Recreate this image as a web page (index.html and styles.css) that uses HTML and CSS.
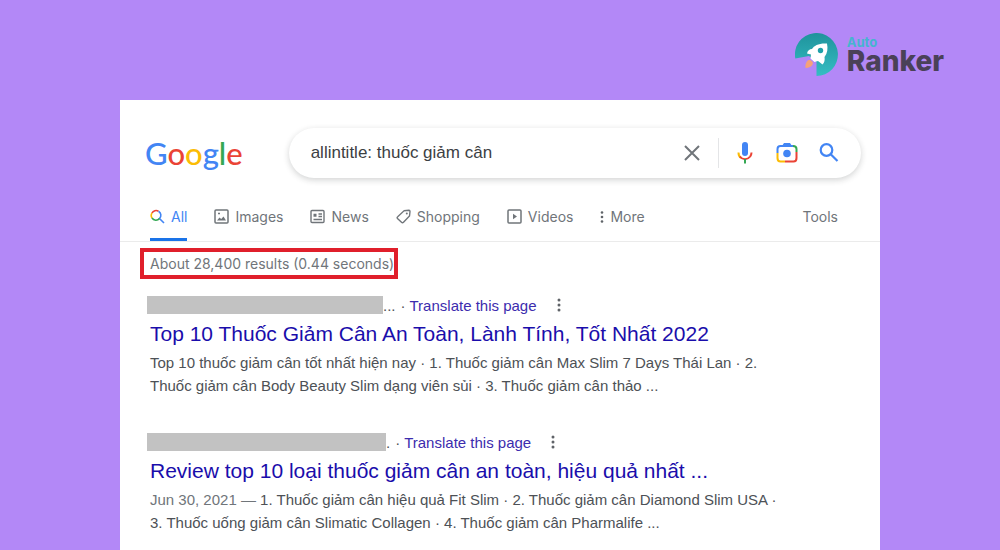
FILE: index.html
```html
<!DOCTYPE html>
<html lang="en">
<head>
<meta charset="utf-8">
<title>allintitle: thuốc giảm cân</title>
<link rel="stylesheet" href="styles.css">
</head>
<body>
<header class="banner">
  <div class="brand">
    <svg class="brand-mark" viewBox="0 0 44 44" aria-hidden="true">
      <defs><linearGradient id="teal" x1="0" y1="0" x2="0" y2="1"><stop offset="0" stop-color="#1f939c"/><stop offset="1" stop-color="#35bdc3"/></linearGradient></defs>
      <path d="M.3 25.500A21.500 21.500 0 1 1 21.500 43V29L14 23Z" fill="url(#teal)"/>
      <path d="M32 10.500C24 10 19 12.500 17 16C14.500 16 12.500 17.500 12 20.500L16 21.500L15.500 25.500L19.500 29L23 28L27.500 31.500C29.500 29.500 30 27 29.500 24C32.500 20 33 15.500 32 10.500Z" fill="#fff"/>
      <circle cx="25.500" cy="17.500" r="2.700" fill="#1fa0a9"/>
      <path d="M10.500 35C10 31.500 11.500 27.500 14 27C17 27 18.500 29.500 17.500 31.500C16.500 33.500 14 35 10.500 35Z" fill="#f6a279"/>
    </svg>
    <div class="brand-text"><span class="brand-top">Auto</span><span class="brand-main">Ranker</span></div>
  </div>
</header>
<main class="page">
  <div class="search-row">
    <a class="google" href="#" aria-label="Google"><span class="blue">G</span><span class="red">o</span><span class="yellow">o</span><span class="blue">g</span><span class="green">l</span><span class="red">e</span></a>
    <form class="search">
      <input class="query" type="text" aria-label="Search" value="allintitle: thuốc giảm cân">
      <button class="icon-button clear" type="button" aria-label="Clear"><svg class="icon-large" viewBox="0 0 22 22"><path d="M4 4L18 18M18 4L4 18" stroke="#70757a" stroke-width="2" fill="none"/></svg></button>
      <span class="divider"></span>
      <button class="icon-button" type="button" aria-label="Search by voice"><svg class="icon-large" viewBox="0 0 22 22" fill="none"><rect x="8" y="0" width="6" height="14" rx="3" fill="#4285f4"/><path d="M4.500 10.500C4.500 13 5.500 15 7 16" stroke="#fbbc04" stroke-width="2"/><path d="M5.800 14.500C8.500 18 13.500 18 16.200 14.500Q17.500 12.500 17.500 10.500" stroke="#ea4335" stroke-width="2"/><path d="M11 17V21.500" stroke="#34a853" stroke-width="2"/></svg></button>
      <button class="icon-button" type="button" aria-label="Search by image"><svg class="icon-large" viewBox="0 0 22 22" fill="none" stroke-width="2"><path d="M1.500 11V7Q1.500 4 4.500 4" stroke="#4285f4"/><path d="M4 4H17" stroke="#4285f4"/><path d="M6 4L8 1H14L16 4Z" fill="#4285f4"/><path d="M17 4Q20.500 4 20.500 7V10" stroke="#34a853"/><path d="M1.500 11V16Q1.500 19.500 4.500 19.500H9" stroke="#fbbc04"/><path d="M9 19.500H17.500Q20.500 19.500 20.500 16V10" stroke="#ea4335"/><circle cx="11" cy="11.500" r="3.800" fill="#4285f4"/></svg></button>
      <button class="icon-button" type="submit" aria-label="Search"><svg class="icon-large" viewBox="0 0 22 22" fill="none" stroke="#4285f4" stroke-width="2.200"><circle cx="8.500" cy="8" r="5.800"/><path d="M12.700 12.200L19.500 19"/></svg></button>
    </form>
  </div>
  <nav class="tabs">
    <a class="tab active" href="#"><svg class="icon" viewBox="0 0 15 15" fill="none" stroke-width="1.600"><path d="M2 9A4.600 4.600 0 0 1 2 4" stroke="#fbbc04"/><path d="M2 4A4.600 4.600 0 0 1 8.500 2.200" stroke="#ea4335"/><path d="M8.500 2.200A4.600 4.600 0 0 1 9.500 9.500L14 14" stroke="#4285f4"/><path d="M9.500 9.500A4.600 4.600 0 0 1 2 9" stroke="#34a853"/></svg>All</a>
    <a class="tab" href="#"><svg class="icon" viewBox="0 0 15 15" fill="none" stroke="#70757a" stroke-width="1.500"><rect x="1" y="1" width="13" height="13" rx="1"/><path d="M3 11.500L5.500 8.500L7.200 10L9.500 7.500L12 11.500Z" fill="#70757a" stroke="none"/><path d="M4 4.500H6"/></svg>Images</a>
    <a class="tab" href="#"><svg class="icon" viewBox="0 0 15 15" fill="none" stroke="#70757a" stroke-width="1.400"><rect x="1" y="1.500" width="13" height="12" rx="1"/><path d="M3.500 5.500H6.500M3.500 7H6.500M8.500 5H12M8.500 7.500H12M3.500 10.500H12"/></svg>News</a>
    <a class="tab" href="#"><svg class="icon" viewBox="0 0 15 15" fill="none" stroke="#70757a" stroke-width="1.400"><path d="M8 1.800L13 1.300Q14 1.300 14 2.500L13.500 7L7.500 13.200Q6.500 14.200 5.500 13.200L1.500 9.500Q.700 8.500 1.700 7.700Z"/><circle cx="10.800" cy="4.500" r="1" fill="#70757a" stroke="none"/></svg>Shopping</a>
    <a class="tab" href="#"><svg class="icon" viewBox="0 0 15 15" fill="none" stroke="#70757a" stroke-width="1.500"><rect x="1" y="1" width="13" height="13" rx="1"/><path d="M6 4.800V10.200L10 7.500Z" fill="#70757a" stroke="none"/></svg>Videos</a>
    <button class="tab" type="button"><svg class="dots" viewBox="0 0 4 14" fill="#5f6368"><circle cx="2" cy="2.500" r="1.300"/><circle cx="2" cy="7" r="1.300"/><circle cx="2" cy="11.500" r="1.300"/></svg>More</button>
    <button class="tab tools" type="button">Tools</button>
  </nav>
  <p class="stats">About 28,400 results (0.44 seconds)</p>
  <article class="result">
    <div class="source"><span class="redacted"></span><span class="dots-text">...</span><span class="separator">·</span><a class="translate" href="#">Translate this page</a><button class="menu" type="button" aria-label="About this result"><svg class="dots" viewBox="0 0 4 14" fill="#5f6368"><circle cx="2" cy="2" r="1.500"/><circle cx="2" cy="7" r="1.500"/><circle cx="2" cy="12" r="1.500"/></svg></button></div>
    <h3 class="title"><a href="#">Top 10 Thuốc Giảm Cân An Toàn, Lành Tính, Tốt Nhất 2022</a></h3>
    <p class="snippet">Top 10 thuốc giảm cân tốt nhất hiện nay · 1. Thuốc giảm cân Max Slim 7 Days Thái Lan · 2.<br>Thuốc giảm cân Body Beauty Slim dạng viên sủi · 3. Thuốc giảm cân thảo ...</p>
  </article>
  <article class="result">
    <div class="source"><span class="redacted wide"></span><span class="dots-text">.</span><span class="separator">·</span><a class="translate" href="#">Translate this page</a><button class="menu" type="button" aria-label="About this result"><svg class="dots" viewBox="0 0 4 14" fill="#5f6368"><circle cx="2" cy="2" r="1.500"/><circle cx="2" cy="7" r="1.500"/><circle cx="2" cy="12" r="1.500"/></svg></button></div>
    <h3 class="title"><a href="#">Review top 10 loại thuốc giảm cân an toàn, hiệu quả nhất ...</a></h3>
    <p class="snippet"><span class="date">Jun 30, 2021 — </span>1. Thuốc giảm cân hiệu quả Fit Slim · 2. Thuốc giảm cân Diamond Slim USA ·<br>3. Thuốc uống giảm cân Slimatic Collagen · 4. Thuốc giảm cân Pharmalife ...</p>
  </article>
</main>
</body>
</html>
```
FILE: styles.css
```css
* { box-sizing: border-box; }
body {
  margin: 0;
  min-height: 100vh;
  display: flex;
  flex-direction: column;
  background: #b388f7;
  font-family: "Liberation Sans", Arial, sans-serif;
  color: #4d5156;
}
a { color: inherit; text-decoration: none; }
button { border: 0; padding: 0; background: none; font: inherit; color: inherit; cursor: pointer; }
svg { display: block; flex: none; }
.banner { display: flex; justify-content: flex-end; padding: 33px 56px 23px; }
.brand { display: flex; align-items: center; gap: 8px; }
.brand-mark { width: 44px; height: 44px; }
.brand-text { display: flex; flex-direction: column; padding-bottom: 2px; font-family: Inter, sans-serif; font-weight: 700; }
.brand-top { font-size: 13px; line-height: 13px; color: #45b5ce; }
.brand-main { font-size: 28px; line-height: 24px; font-weight: 800; color: #4a4158; }
.page { flex: 1; margin: 0 12%; background: #fff; }
.search-row { display: flex; align-items: center; gap: 46px; padding: 28px 19px 0 25px; }
.google { font-family: Lato, sans-serif; font-size: 31px; font-weight: 500; line-height: 48px; }
.blue { color: #4285f4; }
.red { color: #ea4335; }
.yellow { color: #fbbc05; }
.green { color: #34a853; }
.search {
  flex: 1;
  display: flex;
  align-items: center;
  gap: 20px;
  height: 50px;
  padding: 0 21px 0 22px;
  border-radius: 25px;
  box-shadow: 0 2px 6px rgba(32, 33, 36, .2);
}
.query { flex: 1; min-width: 0; border: 0; padding: 0; outline: 0; background: none; font: 17px "Liberation Sans", Arial, sans-serif; color: #3c4043; }
.icon-large { width: 22px; height: 22px; }
.divider { width: 1px; height: 30px; margin: 0 -5px; background: #e4e5e7; }
.tabs { display: flex; align-items: stretch; gap: 27px; height: 64px; padding: 17px 42px 0 30px; border-bottom: 1px solid #ebebeb; font-family: Inter, sans-serif; font-size: 14px; color: #70757a; }
.tab { display: flex; align-items: center; gap: 6px; border-bottom: 3px solid transparent; }
.active { color: #4285f4; border-color: #1a73e8; }
.tools { margin-left: auto; }
.icon { width: 15px; height: 15px; }
.dots { width: 4px; height: 14px; }
.stats { width: fit-content; margin: 6px 0 0 20px; padding: 0 0 0 6px; border: 4px solid #e01f2b; font: 14px/23px Inter, sans-serif; color: #70757a; }
.result { padding: 15px 20px 0 30px; margin-bottom: 19px; }
.source { display: flex; align-items: center; height: 22px; margin-left: -3px; font-size: 15px; }
.redacted { width: 236px; height: 18px; background: #c2c2c2; }
.wide { width: 239px; }
.separator { margin: 0 4px 0 5px; }
.translate { color: #3c2cae; }
.menu { margin-left: 20px; }
.title { margin: 3px 0 2px; font-size: 21px; line-height: 30px; font-weight: 400; color: #1a0dab; }
.snippet { margin: 0; font-size: 15px; line-height: 23px; }
.date { color: #70757a; }
```
